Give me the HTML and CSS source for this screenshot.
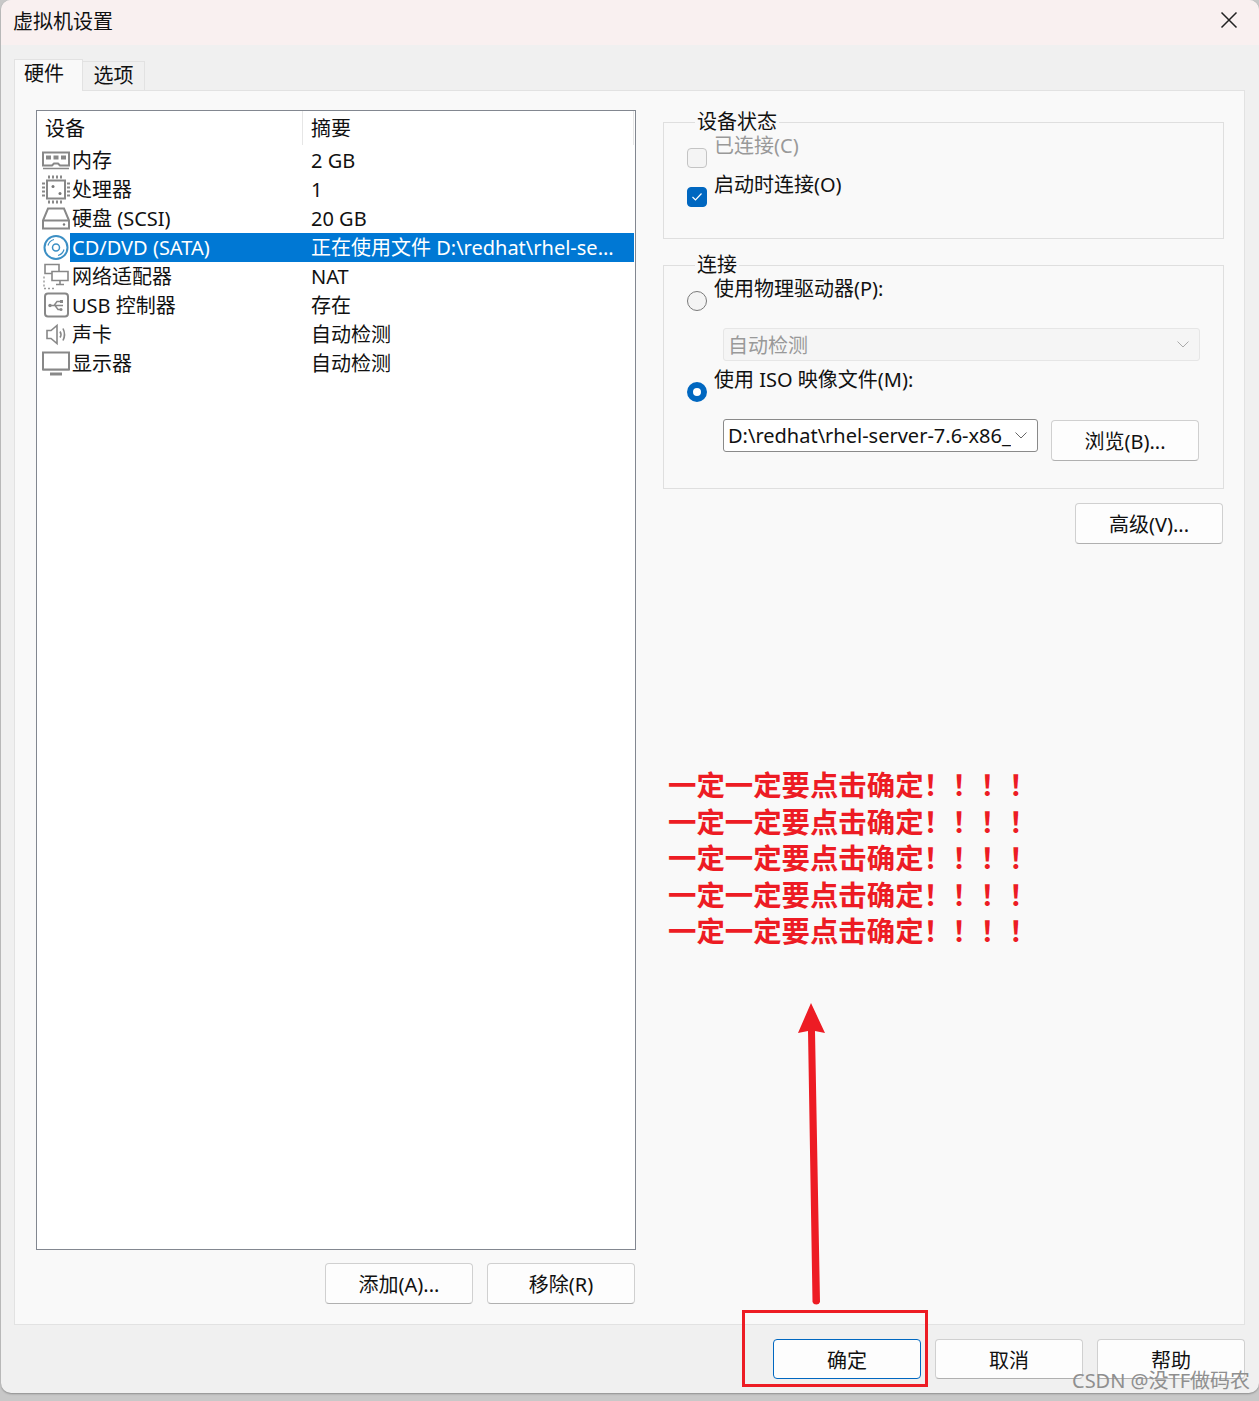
FILE: index.html
```html
<!DOCTYPE html>
<html lang="zh-CN">
<head>
  <meta charset="UTF-8" />
  <title>虚拟机设置</title>
  <link rel="stylesheet" href="styles.css">
</head>
<body>
  <div class="dialog">
    <div class="titlebar">
      <span>虚拟机设置</span>
      <svg class="close" width="18" height="18" viewBox="0 0 18 18"><path d="M1.5 1.5 L16.5 16.5 M16.5 1.5 L1.5 16.5" stroke="#222" stroke-width="1.5" fill="none"/></svg>
    </div>

    <div class="tabs">
      <div class="tab active">硬件</div>
      <div class="tab">选项</div>
    </div>

    <div class="panel">
      <div class="left">
        <div class="list">
          <div class="list-head">
            <div class="col-name">设备</div>
            <div class="col-sum">摘要</div>
          </div>
          <div class="row">
            <svg class="icon" viewBox="0 0 28 20"><g fill="none" stroke="#888" stroke-width="2"><path d="M1 2 H27 V15 H18 L16 13 H12 L10 15 H1 Z"/><path d="M1 18 H27" stroke-width="1.5"/></g><g fill="#888"><rect x="4" y="5" width="5" height="4"/><rect x="11.5" y="5" width="5" height="4"/><rect x="19" y="5" width="5" height="4"/></g></svg>
            <div class="col-name">内存</div><div class="col-sum">2 GB</div>
          </div>
          <div class="row">
            <svg class="icon" viewBox="0 0 28 28"><rect x="5" y="5" width="18" height="18" fill="none" stroke="#888" stroke-width="2"/><circle cx="11" cy="11" r="1.5" fill="#777"/><circle cx="18" cy="18" r="1.5" fill="#777"/><path d="M7 0 V3 M11 0 V3 M15 0 V3 M19 0 V3 M7 25 V28 M11 25 V28 M15 25 V28 M19 25 V28 M0 8 H3 M0 12 H3 M0 16 H3 M0 20 H3 M25 8 H28 M25 12 H28 M25 16 H28 M25 20 H28" stroke="#888" stroke-width="2"/></svg>
            <div class="col-name">处理器</div><div class="col-sum">1</div>
          </div>
          <div class="row">
            <svg class="icon" viewBox="0 0 28 22"><g fill="none" stroke="#888" stroke-width="2"><path d="M6 1 H22 L27 13 V21 H1 V13 Z"/><path d="M1 13 H27"/></g><circle cx="22" cy="17" r="1.2" fill="#777"/></svg>
            <div class="col-name">硬盘 (SCSI)</div><div class="col-sum">20 GB</div>
          </div>
          <div class="row selected">
            <svg class="icon" viewBox="0 0 28 28"><g fill="none" stroke="#3c8fc4"><circle cx="14" cy="14" r="11.5" stroke-width="2"/><circle cx="14" cy="14" r="3.5" stroke-width="1.5"/><path d="M6 12 A8.5 8.5 0 0 1 12 6" stroke-width="1.2"/><path d="M22 16 A8.5 8.5 0 0 1 16 22" stroke-width="1.2"/></g></svg>
            <div class="col-name">CD/DVD (SATA)</div><div class="col-sum">正在使用文件 D:\redhat\rhel-se...</div>
          </div>
          <div class="row">
            <svg class="icon" viewBox="0 0 28 26"><g fill="none" stroke="#888" stroke-width="1.6"><path d="M3 1 H17 V10 H3 Z"/><path d="M10 8 H26 V17 H10 Z" fill="#fff"/><path d="M18 17 V21 M14 21 H22"/></g><path d="M2 13 V25 H14" fill="none" stroke="#999" stroke-width="1.4" stroke-dasharray="2 2"/></svg>
            <div class="col-name">网络适配器</div><div class="col-sum">NAT</div>
          </div>
          <div class="row">
            <svg class="icon" viewBox="0 0 28 26"><rect x="3" y="1" width="23" height="23" rx="3" fill="none" stroke="#888" stroke-width="2"/><path d="M8 13 H21 M12 13 L15 9 H18 M13 13 L16 17 H18" fill="none" stroke="#888" stroke-width="1.4"/><circle cx="8" cy="13" r="1.7" fill="#888"/><rect x="18" y="7.5" width="3" height="3" fill="#888"/><circle cx="19" cy="17" r="1.5" fill="#888"/></svg>
            <div class="col-name">USB 控制器</div><div class="col-sum">存在</div>
          </div>
          <div class="row">
            <svg class="icon" viewBox="0 0 28 22"><path d="M5 7 H9 L15 2 V20 L9 15 H5 Z" fill="none" stroke="#888" stroke-width="1.6"/><path d="M18 8 Q20 11 18 14 M21 5 Q24 11 21 17" fill="none" stroke="#888" stroke-width="1.6"/></svg>
            <div class="col-name">声卡</div><div class="col-sum">自动检测</div>
          </div>
          <div class="row">
            <svg class="icon" viewBox="0 0 28 24"><rect x="1" y="1" width="26" height="17" fill="none" stroke="#888" stroke-width="2"/><path d="M1 19 H27" stroke="#aaa" stroke-width="1"/><path d="M8 22.5 H20" stroke="#888" stroke-width="3"/></svg>
            <div class="col-name">显示器</div><div class="col-sum">自动检测</div>
          </div>
        </div>
        <div class="list-buttons">
          <button class="btn">添加(A)...</button>
          <button class="btn">移除(R)</button>
        </div>
      </div>

      <div class="right">
        <fieldset class="group status-group">
          <legend>设备状态</legend>
          <div class="option disabled">
            <span class="check"></span>已连接(C)
          </div>
          <div class="option">
            <span class="check checked"><svg width="12" height="10" viewBox="0 0 12 10"><path d="M1.5 5 L4.5 8 L10.5 1.5" fill="none" stroke="#fff" stroke-width="1.2"/></svg></span>启动时连接(O)
          </div>
        </fieldset>

        <fieldset class="group conn-group">
          <legend>连接</legend>
          <div class="option">
            <span class="radio"></span>使用物理驱动器(P):
          </div>
          <div class="select select-off">
            <span>自动检测</span>
            <svg width="12" height="7" viewBox="0 0 12 7"><path d="M0.5 0.5 L6 6 L11.5 0.5" fill="none" stroke="#aaa" stroke-width="1"/></svg>
          </div>
          <div class="option option-iso">
            <span class="radio radio-on"></span>使用 ISO 映像文件(M):
          </div>
          <div class="iso-row">
            <div class="select select-iso">
              <span>D:\redhat\rhel-server-7.6-x86_</span>
              <svg width="12" height="7" viewBox="0 0 12 7"><path d="M0.5 0.5 L6 6 L11.5 0.5" fill="none" stroke="#666" stroke-width="1"/></svg>
            </div>
            <button class="btn">浏览(B)...</button>
          </div>
        </fieldset>

        <div class="advanced">
          <button class="btn">高级(V)...</button>
        </div>
      </div>
    </div>

    <div class="footer">
      <button class="btn btn-default">确定</button>
      <button class="btn">取消</button>
      <button class="btn">帮助</button>
    </div>
  </div>

  <!-- 截图上的红色标注 -->
  <div class="note">
    <div>一定一定要点击确定！！！！</div>
    <div>一定一定要点击确定！！！！</div>
    <div>一定一定要点击确定！！！！</div>
    <div>一定一定要点击确定！！！！</div>
    <div>一定一定要点击确定！！！！</div>
  </div>
  <svg class="arrow" width="40" height="310" viewBox="0 0 40 310"><path d="M14 2 L1 32 L11 30 L15.5 301 A4 4 0 0 0 23 301 L18 30 L28 32 Z" fill="#ed1c24"/></svg>
  <div class="red-box"></div>
  <div class="watermark">CSDN @没TF做码农</div>
</body>
</html>
```

FILE: styles.css
```css
* {
  box-sizing: border-box;
}

body {
  margin: 0;
  height: 1401px;
  position: relative;
  overflow: hidden;
  background-color: #c8c8c8;
  color: #111;
  font-family: "Noto Sans", "Noto Sans CJK SC", sans-serif;
  font-size: 20px;
}

.dialog {
  width: 1258px;
  height: 1393px;
  margin-left: 1px;
  background-color: #f0f0f0;
  border-radius: 10px;
  overflow: hidden;
  box-shadow: 0 1px 2px #8c8c8c;
  display: flex;
  flex-direction: column;
}

.titlebar {
  height: 45px;
  flex: none;
  padding: 0 21px 5px 12px;
  background-color: #f9f0f0;
  display: flex;
  align-items: center;
  justify-content: space-between;
}

.tabs {
  height: 45px;
  flex: none;
  padding-left: 13px;
  display: flex;
  align-items: flex-end;
}

.tab {
  width: 62px;
  height: 29px;
  line-height: 28px;
  text-align: center;
  background-color: #f0f0f0;
  border: 1px solid #e2e2e2;
  border-bottom: none;
  border-left: none;
}

.tab.active {
  width: 69px;
  height: 32px;
  line-height: 28px;
  background-color: #f9f9f9;
  border-left: 1px solid #e2e2e2;
  margin-bottom: -1px;
  position: relative;
  padding-right: 9px;
}

.panel {
  height: 1235px;
  flex: none;
  margin: 0 14px 0 13px;
  padding: 19px 20px 0 21px;
  background-color: #f9f9f9;
  border: 1px solid #e2e2e2;
  display: flex;
}

.left {
  width: 600px;
  flex: none;
}

.list {
  height: 1140px;
  background-color: #fff;
  border: 1px solid #828790;
}

.list-head,
.row {
  display: flex;
  height: 29px;
  line-height: 29px;
  padding-right: 1px;
}

.list-head {
  height: 34px;
  line-height: 36px;
  padding-left: 33px;
  margin-bottom: 1px;
}

.list-head .col-name {
  border-right: 1px solid #e6e6e6;
  padding-left: 0;
  text-indent: -25px;
}

.list-head .col-sum {
  border-right: 1px solid #e6e6e6;
}

.icon {
  width: 28px;
  height: 29px;
  flex: none;
  margin: 0 0 0 5px;
}

.col-name {
  width: 233px;
  flex: none;
  padding-left: 2px;
  white-space: nowrap;
}

.col-sum {
  flex: 1;
  padding-left: 8px;
  white-space: nowrap;
  overflow: hidden;
}

.row.selected .col-name,
.row.selected .col-sum {
  background-color: #0078d4;
  color: #fff;
}

.list-buttons {
  display: flex;
  justify-content: flex-end;
  gap: 14px;
  margin-top: 13px;
  padding-right: 1px;
}

.btn {
  width: 148px;
  height: 41px;
  padding: 0;
  font-family: inherit;
  font-size: 20px;
  color: #111;
  background-color: #fdfdfd;
  border: 1px solid #d0d0d0;
  border-bottom-color: #b0b0b0;
  border-radius: 4px;
}

.btn-default {
  border: 1px solid #0067c0;
}

.right {
  width: 561px;
  flex: none;
  margin-left: 27px;
}

.group {
  margin: 0;
  padding: 0 0 0 23px;
  border: 1px solid #dfdfdf;
  min-width: 0;
}

.group legend {
  margin-left: 8px;
  padding: 0 2px;
  height: 26px;
  line-height: 26px;
}

.status-group {
  height: 130px;
  margin-top: -1px;
}

.conn-group {
  height: 237px;
  margin-top: 13px;
}

.option {
  height: 30px;
  display: flex;
  align-items: center;
  margin-top: 8px;
  white-space: pre;
}

.status-group .option + .option {
  margin-top: 9px;
}

.option.disabled {
  color: #999;
}

.check,
.radio {
  width: 20px;
  height: 20px;
  flex: none;
  margin-right: 7px;
  border: 1px solid #c4c4c4;
  border-radius: 4px;
  background-color: #f4f4f4;
  display: flex;
  align-items: center;
  justify-content: center;
}

.check.checked {
  background-color: #0067c0;
  border-color: #0067c0;
}

.radio {
  border-radius: 50%;
  border-color: #7a7a7a;
}

.radio-on {
  border: 6px solid #0067c0;
  background-color: #fff;
}

.select {
  height: 33px;
  margin-left: 36px;
  padding: 0 10px 0 4px;
  display: flex;
  align-items: center;
  justify-content: space-between;
  white-space: nowrap;
}

.select-off {
  width: 477px;
  margin-top: 12px;
  color: #999;
  background-color: #f5f5f5;
  border: 1px solid #e6e6e6;
  border-radius: 3px;
}

.option-iso {
  margin-top: 16px;
}

.iso-row {
  display: flex;
  align-items: flex-start;
  gap: 13px;
  margin-top: 12px;
}

.select-iso {
  width: 315px;
  background-color: #fff;
  border: 1px solid #8a8a8a;
  border-radius: 3px;
}

.select-iso span {
  overflow: hidden;
}

.iso-row .btn {
  margin-top: 1px;
}

.advanced {
  display: flex;
  justify-content: flex-end;
  margin-top: 14px;
  padding-right: 1px;
}

.footer {
  flex: 1;
  display: flex;
  justify-content: flex-end;
  align-items: flex-start;
  gap: 14px;
  padding: 14px 14px 0 0;
}

.footer .btn {
  height: 40px;
}

.note {
  position: absolute;
  left: 668px;
  top: 767px;
  color: #ed1c24;
  font-size: 28.4px;
  font-weight: 700;
  line-height: 36.6px;
  white-space: nowrap;
}

.arrow {
  position: absolute;
  left: 797px;
  top: 1001px;
}

.red-box {
  position: absolute;
  left: 742px;
  top: 1310px;
  width: 186px;
  height: 77px;
  border: 3px solid #ed1c24;
}

.watermark {
  position: absolute;
  left: 1072px;
  top: 1367px;
  color: #8f8f8f;
  font-size: 20px;
  line-height: 28px;
  white-space: nowrap;
}
```
